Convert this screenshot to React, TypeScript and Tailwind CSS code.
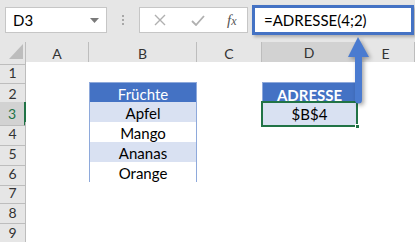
import React from "react";

const cols = ["A", "B", "C", "D", "E"];
const rows = [1, 2, 3, 4, 5, 6, 7, 8, 9];
const fruits = ["Apfel", "Mango", "Ananas", "Orange"];

export default function App() {
  return (
    <div
      className="relative w-[415px] h-[242px] overflow-hidden bg-[#e6e6e6] text-black"
      style={{ fontFamily: "Lato, 'Open Sans', sans-serif" }}
    >
      {/* Formula bar */}
      <div className="flex h-[40px] items-center">
        <div className="ml-[5px] flex h-[26px] w-[102px] items-center justify-between border border-[#c6c6c6] bg-white pl-[7px] pr-[7px] text-[15px]">
          <span>D3</span>
          <svg width="9" height="5" viewBox="0 0 9 5">
            <path d="M0 0h9L4.5 5z" fill="#7a7a7a" />
          </svg>
        </div>
        <div className="ml-[13px] flex w-[6px] flex-col items-center gap-[2px]">
          <span className="h-[2px] w-[2px] bg-[#a8a8a8]" />
          <span className="h-[2px] w-[2px] bg-[#a8a8a8]" />
          <span className="h-[2px] w-[2px] bg-[#a8a8a8]" />
        </div>
        <div className="ml-[13px] flex h-[26px] w-[109px] items-center border border-[#c6c6c6] bg-white">
          <svg className="ml-[14px]" width="12" height="12" viewBox="0 0 12 12">
            <path d="M1 1l10 10M11 1L1 11" stroke="#b0b0b0" strokeWidth="1.4" />
          </svg>
          <svg className="ml-[25px]" width="14" height="11" viewBox="0 0 14 11">
            <path d="M1 6l4 4 8-9" stroke="#b0b0b0" strokeWidth="1.8" fill="none" />
          </svg>
          <span
            className="ml-[22px] text-[15px] italic text-[#555]"
            style={{ fontFamily: "'Liberation Serif', serif" }}
          >
            f<span className="text-[12px]">x</span>
          </span>
        </div>
        <div className="ml-[4px] flex h-[30px] w-[162px] items-center border-[3px] border-[#4472c4] bg-white pl-[9px] text-[15px] shadow-[2px_2px_3px_rgba(0,0,0,0.25)]">
          =ADRESSE(4;2)
        </div>
      </div>
      <div className="h-[2px]" />

      {/* Column headers */}
      <div className="grid h-[20px] grid-cols-[26px_63px_108px_65px_95px_1fr] text-[14px] text-[#333]">
        <div className="relative border-r border-b border-[#bdbdbd]">
          <svg className="absolute left-[9px] top-[2px]" width="14" height="15" viewBox="0 0 14 15">
            <path d="M14 0V15H0z" fill="#bdbdbd" />
          </svg>
        </div>
        {cols.map((c) => (
          <div
            key={c}
            className={
              c === "D"
                ? "flex items-center justify-center border-r border-[#bdbdbd] border-b-2 border-b-[#217346] bg-[#d2d2d2]"
                : "flex items-center justify-center border-r border-b border-[#bdbdbd]"
            }
          >
            {c}
          </div>
        ))}
      </div>

      {/* Rows */}
      {rows.map((r) => (
        <div
          key={r}
          className="grid h-[20px] grid-cols-[26px_63px_108px_65px_95px_1fr] text-[15px]"
        >
          <div
            className={
              r === 3
                ? "flex items-center justify-center border-b border-[#bdbdbd] border-r-2 border-r-[#217346] bg-[#d2d2d2] text-[14px] text-[#217346]"
                : "flex items-center justify-center border-r border-b border-[#bdbdbd] text-[14px] text-[#333]"
            }
          >
            {r}
          </div>
          <div className="bg-white" />
          {r === 2 ? (
            <div className="flex items-center justify-center border border-[#8ea9db] bg-[#4472c4] text-white">
              Früchte
            </div>
          ) : r >= 3 && r <= 6 ? (
            <div
              className={
                r % 2 === 1
                  ? "flex items-center justify-center border-x border-b border-[#8ea9db] bg-[#d9e1f2]"
                  : "flex items-center justify-center border-x border-b border-[#8ea9db] bg-white"
              }
            >
              {fruits[r - 3]}
            </div>
          ) : (
            <div className="bg-white" />
          )}
          <div className="bg-white" />
          {r === 2 ? (
            <div className="flex items-center justify-center border-x border-t border-[#8ea9db] bg-[#4472c4] font-bold text-white">
              ADRESSE
            </div>
          ) : r === 3 ? (
            <div className="relative flex items-center justify-center bg-[#d9e1f2]">
              $B$4
              <div className="absolute -inset-[1px] border-2 border-[#217346]" />
              <div className="absolute -bottom-[3px] -right-[3px] h-[5px] w-[5px] border border-white bg-[#217346]" />
            </div>
          ) : (
            <div className="bg-white" />
          )}
          <div className="bg-white" />
        </div>
      ))}

      {/* Arrow */}
      <svg
        className="absolute left-[340px] top-[30px]"
        width="40"
        height="80"
        viewBox="0 0 40 80"
        style={{ filter: "drop-shadow(2px 2px 2px rgba(0,0,0,0.35))" }}
      >
        <path
          d="M18 7L8 27H15V70a3.5 3.5 0 0 0 7 0V27H29z"
          fill="#4a7bd0"
        />
      </svg>
    </div>
  );
}
